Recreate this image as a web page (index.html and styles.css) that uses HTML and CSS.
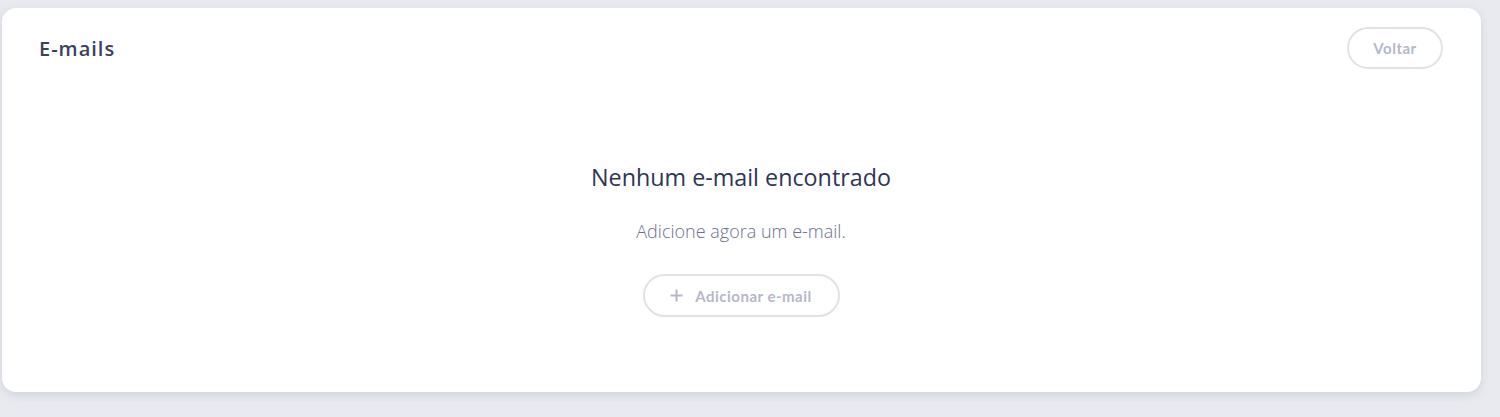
FILE: index.html
```html
<!DOCTYPE html>
<html lang="pt">
<head>
<meta charset="utf-8">
<title>E-mails</title>
<link rel="stylesheet" href="styles.css">
</head>
<body>
<section class="card">
  <header class="card-header">
    <h1 class="card-title">E-mails</h1>
    <button class="btn-outline btn-back">Voltar</button>
  </header>
  <div class="empty">
    <h2 class="empty-title">Nenhum e-mail encontrado</h2>
    <p class="empty-text">Adicione agora um e-mail.</p>
    <button class="btn-outline btn-add">
      <svg class="plus" width="13" height="13" viewBox="0 0 13 13"><path d="M6.5 0.5v12M0.5 6.5h12" stroke="currentColor" stroke-width="2" fill="none"/></svg>
      <span>Adicionar e-mail</span>
    </button>
  </div>
</section>
</body>
</html>
```
FILE: styles.css
```css
html, body {
  height: 100%;
}
body {
  margin: 0;
  padding: 8px 19px 0 2px;
  box-sizing: border-box;
  background: #e9eaef;
  font-family: "Open Sans", sans-serif;
}
.card {
  background: #ffffff;
  border-radius: 14px;
  box-shadow: 0 3px 8px rgba(160, 165, 190, 0.35);
  padding: 19px 38px 76px 37px;
  height: 384px;
  box-sizing: border-box;
}
.card-header {
  display: flex;
  justify-content: space-between;
  align-items: center;
}
.card-title {
  margin: 0;
  font-family: "Open Sans", sans-serif;
  font-weight: 600;
  font-size: 20px;
  color: #3a4260;
  letter-spacing: 1px;
}
.btn-outline {
  background: #fff;
  border: 2px solid #e1e2e8;
  border-radius: 999px;
  font-family: "Lato", sans-serif;
  font-weight: 700;
  font-size: 15px;
  color: #b5b8c7;
  cursor: pointer;
  letter-spacing: 0.5px;
}
.btn-back {
  width: 96px;
  height: 42px;
}
.empty {
  display: flex;
  flex-direction: column;
  align-items: center;
  padding-top: 92px;
}
.empty-title {
  margin: 0;
  font-weight: 400;
  font-size: 23.3px;
  line-height: 32px;
  color: #2e3654;
}
.empty-text {
  margin: 26px 0 0;
  font-weight: 300;
  font-size: 18px;
  line-height: 24px;
  color: #6b7090;
}
.btn-add {
  margin-top: 31px;
  width: 197px;
  height: 43px;
  display: flex;
  align-items: center;
  justify-content: center;
  gap: 12px;
  padding: 0;
}
.plus {
  display: block;
  color: #b5b8c7;
}
```
